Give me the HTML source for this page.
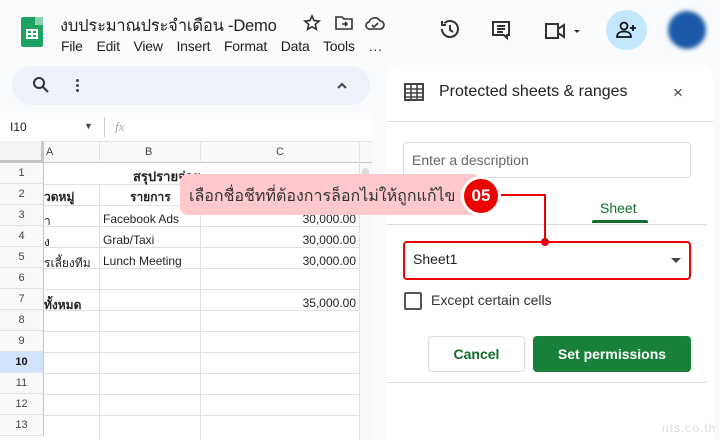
<!DOCTYPE html>
<html><head><meta charset="utf-8"><style>
*{box-sizing:border-box;margin:0;padding:0}
body{width:720px;height:440px;overflow:hidden;background:#f9fbfd;font-family:"Liberation Sans","Noto Sans CJK SC",sans-serif;position:relative;color:#1f1f1f}
.a{position:absolute}
.rh{position:absolute;left:0;width:44px;height:21px;background:#f8f9fa;border-right:1px solid #c7c7c7;border-bottom:1px solid #e1e1e1;font-size:11px;text-align:center;line-height:20px;color:#444}
</style></head><body>
<div class="a" style="left:21px;top:17px;width:22px;height:30px;background:#1ea362;border-radius:2px"></div>
<div class="a" style="left:35px;top:17px;width:8px;height:8px;background:#8ed1b1"></div>
<div class="a" style="left:26px;top:29px;width:12px;height:10px;border:2px solid #fff"></div>
<div class="a" style="left:31px;top:29px;width:2px;height:10px;background:#fff"></div>
<div class="a" style="left:26px;top:33px;width:12px;height:2px;background:#fff"></div>
<div class="a" style="left:60px;top:13px;font-size:16.5px;letter-spacing:-0.2px">งบประมาณประจำเดือน -Demo</div>
<svg class="a" style="left:303px;top:14px" width="18" height="18" viewBox="0 0 18 18" fill="none" stroke="#333" stroke-width="1.6"><path d="M9 2l2.1 4.6 5 .5-3.8 3.3 1.1 4.9L9 12.8l-4.4 2.5 1.1-4.9L1.9 7.1l5-.5z"/></svg>
<svg class="a" style="left:335px;top:15px" width="18" height="16" viewBox="0 0 18 16" fill="none" stroke="#333" stroke-width="1.6"><path d="M1 2h6l2 2h8v10H1z"/><path d="M7 9h5M10 7l2 2-2 2"/></svg>
<svg class="a" style="left:365px;top:15px" width="20" height="16" viewBox="0 0 20 16" fill="none" stroke="#333" stroke-width="1.6"><path d="M5 14h10a4 4 0 0 0 0-8 6 6 0 0 0-11 1 3.5 3.5 0 0 0 1 7z"/><path d="M7 10l2 2 4-4"/></svg>
<div class="a" style="left:61px;top:38px;font-size:14px;word-spacing:10px;letter-spacing:-0.2px">File Edit View Insert Format Data Tools …</div>
<svg class="a" style="left:438px;top:17px" width="24" height="24" viewBox="0 0 24 24" fill="none" stroke="#333" stroke-width="2"><path d="M4 12a8 8 0 1 0 2.5-5.8M4 4v4h4M12 8v5l3 2"/></svg>
<svg class="a" style="left:489px;top:18px" width="24" height="24" viewBox="0 0 24 24" fill="none" stroke="#333" stroke-width="2"><path d="M4 4h16v13H18v3l-3-3H4zM8 8h8M8 11h8M8 14h6"/></svg>
<svg class="a" style="left:543px;top:20px" width="40" height="24" viewBox="0 0 40 24" fill="none" stroke="#333" stroke-width="2"><path d="M3 4h12v14H3zM15 9l6-4v12l-6-4"/><path d="M31 10h6l-3 3z" fill="#333" stroke="none"/></svg>
<div class="a" style="left:606px;top:10px;width:41px;height:40px;border-radius:50%;background:#c2e7ff"></div>
<svg class="a" style="left:616px;top:20px" width="22" height="20" viewBox="0 0 22 20" fill="none" stroke="#111" stroke-width="1.8"><circle cx="8" cy="6" r="3.5"/><path d="M1 17c0-4 3.5-5.5 7-5.5s7 1.5 7 5.5zM17 5v6M14 8h6"/></svg>
<div class="a" style="left:668px;top:11px;width:38px;height:38px;border-radius:50%;background:#1a5aa8;filter:blur(2px)"></div>
<div class="a" style="left:12px;top:66px;width:358px;height:39px;border-radius:20px;background:#edf2fa"></div>
<svg class="a" style="left:32px;top:76px" width="18" height="18" viewBox="0 0 18 18" fill="none" stroke="#333" stroke-width="2"><circle cx="7" cy="7" r="5"/><path d="M11 11l5 5"/></svg>
<div class="a" style="left:76px;top:79px;width:3px;height:3px;background:#444;border-radius:50%;box-shadow:0 5px #444,0 10px #444"></div>
<svg class="a" style="left:336px;top:80px" width="12" height="10" viewBox="0 0 12 10" fill="none" stroke="#444" stroke-width="2"><path d="M2 8l4-4 4 4"/></svg>
<div class="a" style="left:0;top:113px;width:372px;height:327px;background:#fff"></div>
<div class="a" style="left:10px;top:120px;font-size:12px">I10</div>
<div class="a" style="left:84px;top:121px;font-size:9px;color:#444">▼</div>
<div class="a" style="left:104px;top:117px;width:1px;height:20px;background:#ccc"></div>
<div class="a" style="left:115px;top:119px;font-size:13px;color:#aaa;font-style:italic;font-family:'Liberation Serif',serif">fx</div>
<div class="a" style="left:0;top:141px;width:372px;height:22px;background:#f8f9fa;border-bottom:1px solid #c7c7c7;border-top:1px solid #e1e1e1"></div>
<div class="a" style="left:0;top:141px;width:44px;height:22px;background:#f1f3f4;border-right:3px solid #c7c7c7;border-bottom:3px solid #c7c7c7"></div>
<div class="a" style="left:46px;top:146px;font-size:11px;color:#444">A</div>
<div class="a" style="left:99px;top:141px;width:1px;height:299px;background:#e1e1e1"></div>
<div class="a" style="left:200px;top:141px;width:1px;height:299px;background:#e1e1e1"></div>
<div class="a" style="left:359px;top:141px;width:1px;height:299px;background:#e1e1e1"></div>
<div class="a" style="left:145px;top:146px;font-size:11px;color:#444">B</div>
<div class="a" style="left:276px;top:146px;font-size:11px;color:#444">C</div>
<div class="a" style="left:360px;top:163px;width:12px;height:277px;background:#f8f9fa"></div>
<div class="a" style="left:362px;top:168px;width:7px;height:14px;background:#dadce0;border-radius:4px"></div>
<div class="rh" style="top:163px">1</div><div class="rh" style="top:184px">2</div><div class="rh" style="top:205px">3</div><div class="rh" style="top:226px">4</div><div class="rh" style="top:247px">5</div><div class="rh" style="top:268px">6</div><div class="rh" style="top:289px">7</div><div class="rh" style="top:310px">8</div><div class="rh" style="top:331px">9</div><div class="rh" style="top:352px;background:#d3e3fd;font-weight:bold;color:#111">10</div><div class="rh" style="top:373px">11</div><div class="rh" style="top:394px">12</div><div class="rh" style="top:415px">13</div>
<div class="a" style="left:44px;top:184px;width:316px;height:1px;background:#e1e1e1;box-shadow:0 21px #e1e1e1,0 42px #e1e1e1,0 63px #e1e1e1,0 84px #e1e1e1,0 105px #e1e1e1,0 126px #e1e1e1,0 147px #e1e1e1,0 168px #e1e1e1,0 189px #e1e1e1,0 210px #e1e1e1,0 231px #e1e1e1"></div>
<div class="a" style="left:44px;top:163px;width:315px;height:21px;background:#fff"></div>
<div class="a" style="left:133px;top:166px;font-size:13px;font-weight:bold">สรุปรายจ่าย</div>
<div class="a" style="left:44px;top:188px;font-size:12px;font-weight:bold">วดหมู่</div>
<div class="a" style="left:130px;top:188px;font-size:12px;font-weight:bold">รายการ</div>
<div class="a" style="left:44px;top:212px;font-size:12px">า</div>
<div class="a" style="left:103px;top:212px;font-size:12px">Facebook Ads</div>
<div class="a" style="left:44px;top:233px;font-size:12px">ง</div>
<div class="a" style="left:103px;top:233px;font-size:12px">Grab/Taxi</div>
<div class="a" style="left:44px;top:254px;font-size:12px">รเลี้ยงทีม</div>
<div class="a" style="left:103px;top:254px;font-size:12px">Lunch Meeting</div>
<div class="a" style="left:44px;top:296px;font-size:12px;font-weight:bold">ทั้งหมด</div>
<div class="a" style="left:250px;top:212px;width:106px;text-align:right;font-size:12px;line-height:14px">30,000.00<br><span style="display:block;margin-top:7px">30,000.00</span><span style="display:block;margin-top:7px">30,000.00</span></div>
<div class="a" style="left:250px;top:296px;width:106px;text-align:right;font-size:12px">35,000.00</div>
<div class="a" style="left:387px;top:65px;width:326px;height:375px;background:#fff;border-radius:12px 12px 0 0"></div>
<svg class="a" style="left:404px;top:83px" width="20" height="18" viewBox="0 0 20 18"><rect x="1" y="1" width="18" height="16" fill="none" stroke="#444" stroke-width="2"/><path d="M1 6h18M1 10h18M1 14h18M7 1v16M13 1v16" stroke="#444" stroke-width="1.6"/></svg>
<div class="a" style="left:439px;top:83px;font-size:16px;color:#222">Protected sheets &amp; ranges</div>
<div class="a" style="left:673px;top:83px;font-size:17px;color:#444">×</div>
<div class="a" style="left:387px;top:121px;width:326px;height:1px;background:#dadce0"></div>
<div class="a" style="left:403px;top:142px;width:288px;height:36px;border:1px solid #dadce0;border-radius:4px;padding:9px 8px;font-size:14px;color:#666">Enter a description</div>
<div class="a" style="left:387px;top:224px;width:320px;height:1px;background:#dadce0"></div>
<div class="a" style="left:600px;top:200px;font-size:14px;color:#146c2e">Sheet</div>
<div class="a" style="left:592px;top:220px;width:56px;height:3px;background:#146c2e;border-radius:2px 2px 0 0"></div>
<div class="a" style="left:403px;top:241px;width:288px;height:39px;border:2px solid #e00;border-radius:4px;padding:8px 8px;font-size:14px">Sheet1</div>
<div class="a" style="left:671px;top:258px;width:0;height:0;border-left:5px solid transparent;border-right:5px solid transparent;border-top:5px solid #444"></div>
<div class="a" style="left:404px;top:292px;width:18px;height:18px;border:2px solid #555;border-radius:2px"></div>
<div class="a" style="left:431px;top:292px;font-size:14px;color:#333">Except certain cells</div>
<div class="a" style="left:428px;top:336px;width:97px;height:36px;border:1px solid #dadce0;border-radius:4px;text-align:center;line-height:34px;font-size:14px;font-weight:bold;color:#146c2e">Cancel</div>
<div class="a" style="left:533px;top:336px;width:158px;height:36px;background:#188038;border-radius:4px;text-align:center;line-height:36px;font-size:14px;font-weight:bold;color:#fff">Set permissions</div>
<div class="a" style="left:387px;top:382px;width:320px;height:1px;background:#dadce0"></div>
<div class="a" style="left:662px;top:421px;font-size:12px;color:#ddd;letter-spacing:1px">nts.co.th</div>
<div class="a" style="left:180px;top:174px;width:300px;height:41px;background:#ffc8cd;border-radius:8px"></div>
<div class="a" style="left:189px;top:184px;font-size:16px;color:#333">เลือกชื่อชีทที่ต้องการล็อกไม่ให้ถูกแก้ไข</div>
<div class="a" style="left:500px;top:194px;width:46px;height:2px;background:#e00"></div>
<div class="a" style="left:544px;top:194px;width:2px;height:48px;background:#e00"></div>
<div class="a" style="left:541px;top:238px;width:8px;height:8px;border-radius:50%;background:#e00"></div>
<div class="a" style="left:461px;top:176px;width:40px;height:40px;border-radius:50%;background:#e00;border:3px solid #fff;color:#fff;font-weight:bold;font-size:17px;text-align:center;line-height:34px">05</div>
</body></html>
